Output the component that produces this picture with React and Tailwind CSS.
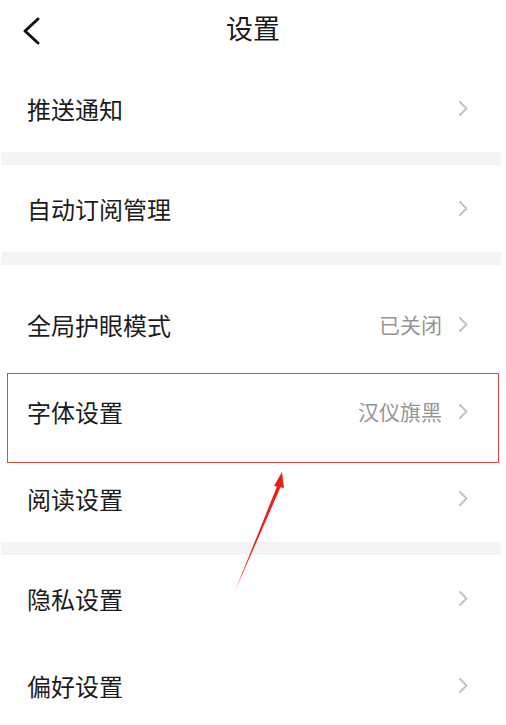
const sections = [
  [{ label: '推送通知' }],
  [{ label: '自动订阅管理' }],
  [
    { label: '全局护眼模式', value: '已关闭' },
    { label: '字体设置', value: '汉仪旗黑' },
    { label: '阅读设置' },
  ],
  [{ label: '隐私设置' }, { label: '偏好设置' }],
];

function Chevron() {
  return (
    <svg width="11" height="17" viewBox="0 0 11 17">
      <path d="M2 2 L8.5 8.5 L2 15" fill="none" stroke="#c2c2c2" strokeWidth="2" strokeLinecap="round" strokeLinejoin="round" />
    </svg>
  );
}

function Row({ label, value }) {
  return (
    <div className="flex h-[87px] items-center pl-[27px] pr-[37px]">
      <span className="flex-1 text-[24px] leading-none text-[#1c1c1c]">{label}</span>
      {value && <span className="mr-[16px] text-[21px] leading-none text-[#959595]">{value}</span>}
      <Chevron />
    </div>
  );
}

export default function App() {
  return (
    <div
      className="relative h-[725px] w-[506px] overflow-hidden bg-white"
      style={{ fontFamily: '"Noto Sans CJK SC", "Noto Sans", sans-serif' }}
    >
      {/* Header */}
      <div className="relative flex h-[65px] items-center justify-center">
        <svg className="absolute left-[21px] top-[16px]" width="22" height="30" viewBox="0 0 22 30">
          <path d="M17 3 L4 15 L17 27" fill="none" stroke="#111" strokeWidth="3" strokeLinecap="round" strokeLinejoin="round" />
        </svg>
        <span className="-mt-[9px] text-[27px] text-[#1a1a1a]">设置</span>
      </div>

      {sections.map((rows, i) => (
        <div key={i}>
          {i > 0 && <div className="ml-px h-[13px] w-[500px] bg-[#f4f4f4]" />}
          <div className={i === 2 ? 'pt-[16px]' : ''}>
            {rows.map(r => (
              <Row key={r.label} {...r} />
            ))}
          </div>
        </div>
      ))}

      {/* Annotation: red box */}
      <div className="pointer-events-none absolute left-[7px] top-[373px] h-[90px] w-[492px] border-[1.5px] border-[#dd4a45]" />

      {/* Annotation: red arrow */}
      <svg className="pointer-events-none absolute left-0 top-0" width="506" height="725" viewBox="0 0 506 725">
        <polygon points="235,591 278,484 281,486" fill="#ee1c14" />
        <polygon points="282,472 274,486 284,488" fill="#ee1c14" />
      </svg>
    </div>
  );
}
